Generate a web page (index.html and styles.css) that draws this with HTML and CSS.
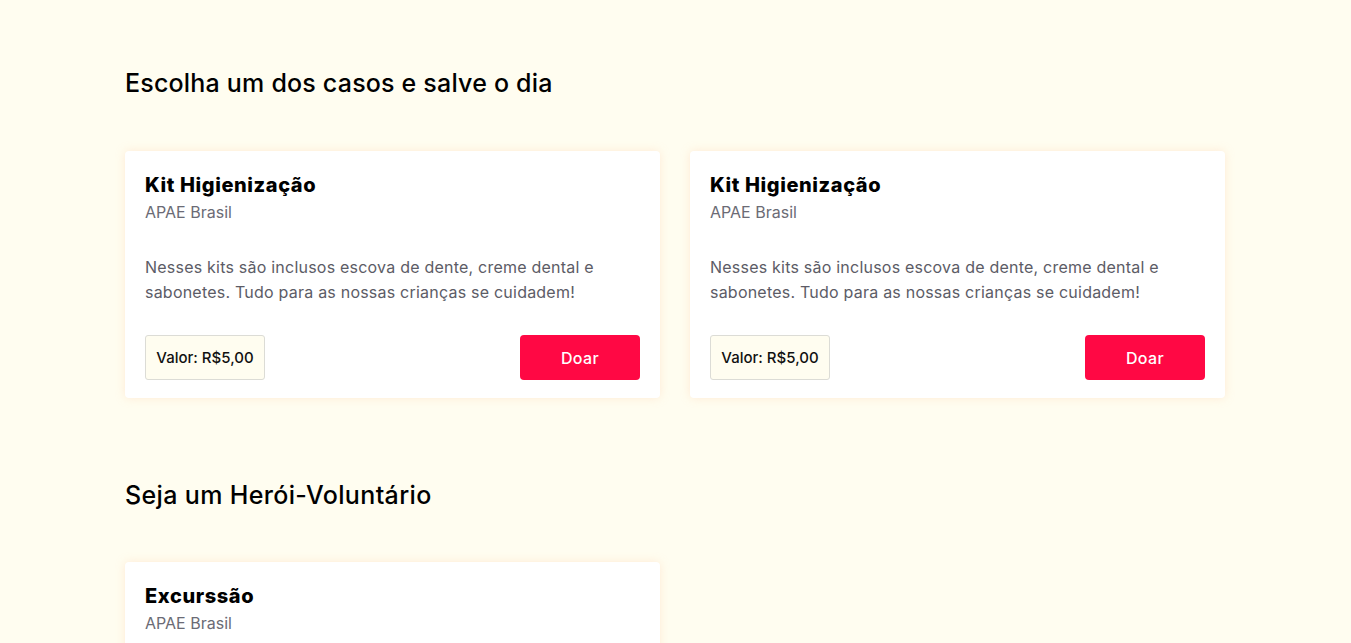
FILE: index.html
```html
<!DOCTYPE html>
<html lang="pt-BR">
<head>
<meta charset="utf-8">
<title>Casos</title>
<link rel="stylesheet" href="styles.css">
</head>
<body>
<main class="page">
  <section class="section section-first">
    <h2 class="section-title">Escolha um dos casos e salve o dia</h2>
    <div class="cards">
      <article class="card">
        <h3 class="card-title">Kit Higienização</h3>
        <p class="card-org">APAE Brasil</p>
        <p class="card-desc">Nesses kits são inclusos escova de dente, creme dental e sabonetes. Tudo para as nossas crianças se cuidadem!</p>
        <div class="card-footer">
          <span class="price">Valor: R$5,00</span>
          <button class="btn">Doar</button>
        </div>
      </article>
      <article class="card">
        <h3 class="card-title">Kit Higienização</h3>
        <p class="card-org">APAE Brasil</p>
        <p class="card-desc">Nesses kits são inclusos escova de dente, creme dental e sabonetes. Tudo para as nossas crianças se cuidadem!</p>
        <div class="card-footer">
          <span class="price">Valor: R$5,00</span>
          <button class="btn">Doar</button>
        </div>
      </article>
    </div>
  </section>
  <section class="section section-second">
    <h2 class="section-title title-second">Seja um Herói-Voluntário</h2>
    <div class="cards">
      <article class="card">
        <h3 class="card-title">Excurssão</h3>
        <p class="card-org">APAE Brasil</p>
        <p class="card-desc">Ajude nossas crianças a conhecerem novos lugares e viverem novas experiências!</p>
        <div class="card-footer">
          <span class="price">Vagas: 5</span>
          <button class="btn">Participar</button>
        </div>
      </article>
    </div>
  </section>
</main>
</body>
</html>
```

FILE: styles.css
```css
* { box-sizing: border-box; }
html, body {
  margin: 0;
  padding: 0;
  background: #fffdf0;
}
body {
  font-family: "Inter", "Open Sans", "Liberation Sans", sans-serif;
  color: #000;
}
.page {
  width: 1100px;
  margin: 0 125px;
}
.section-first { padding-top: 65px; }
.section-second { margin-top: 79px; }
.section-title {
  margin: 0 0 50px;
  font-size: 25px;
  line-height: 36px;
  font-weight: 500;
  letter-spacing: 0.2px;
}
.title-second {
  margin-bottom: 49px;
  letter-spacing: 0.35px;
}
.cards {
  display: grid;
  grid-template-columns: 535px 535px;
  column-gap: 30px;
}
.card {
  background: #fff;
  border-radius: 4px;
  box-shadow: 0 0 10px rgba(255, 200, 160, 0.35);
  padding: 20px 20px 18px;
}
.card-title {
  margin: 0;
  font-size: 20px;
  line-height: 29px;
  font-weight: 800;
  letter-spacing: 0.6px;
}
.card-org {
  margin: 0;
  font-size: 16px;
  line-height: 24px;
  color: #6b6b75;
}
.card-desc {
  margin: 31px 0 0;
  font-size: 16px;
  line-height: 25px;
  color: #5c5c66;
  letter-spacing: 0.22px;
}
.card-footer {
  margin-top: 30px;
  display: flex;
  justify-content: space-between;
  align-items: center;
}
.price {
  width: 120px;
  height: 45px;
  display: flex;
  align-items: center;
  justify-content: center;
  border: 1px solid #dcdcd6;
  border-radius: 3px;
  background: #fffdf0;
  font-size: 15px;
  font-weight: 500;
  color: #111;
}
.btn {
  width: 120px;
  height: 45px;
  border: 0;
  border-radius: 4px;
  background: #ff0844;
  color: #fff;
  font-family: inherit;
  font-size: 16px;
  font-weight: 500;
  letter-spacing: 0.4px;
}
```
